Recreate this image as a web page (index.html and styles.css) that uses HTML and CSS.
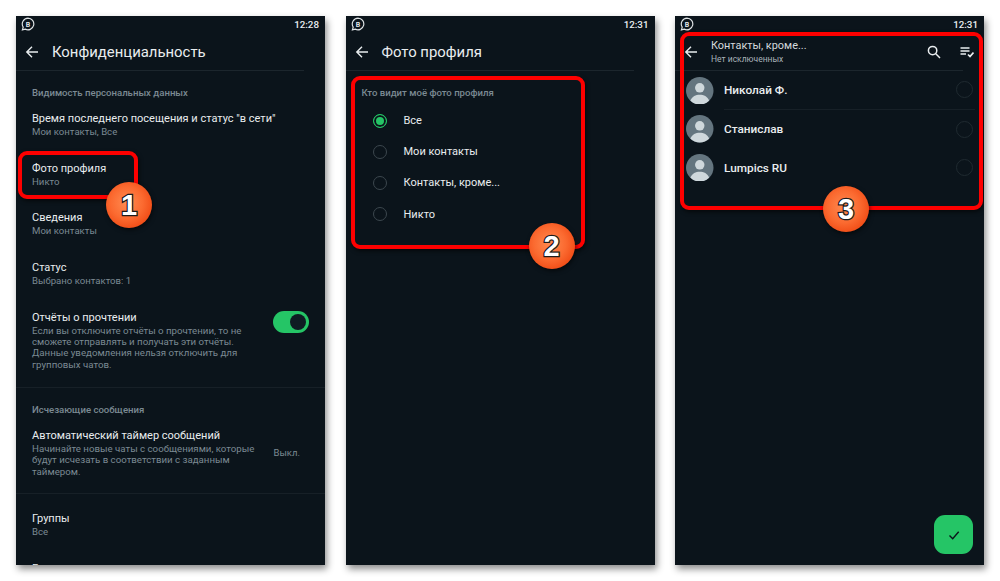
FILE: index.html
```html
<!DOCTYPE html>
<html lang="ru">
<head>
  <meta charset="UTF-8">
  <title>Конфиденциальность</title>
  <link rel="stylesheet" href="styles.css">
</head>
<body>

<div class="screens">

  <!-- экран 1 -->
  <section class="phone">
    <div class="status">
      <svg class="wa" viewBox="0 0 12 12"><path d="M6 1a5 5 0 1 1-2.4 9.4L1.2 11l.7-2.3A5 5 0 0 1 6 1z"/><text x="6" y="8.2" text-anchor="middle">B</text></svg>
      <span class="time">12:28</span>
    </div>
    <header class="appbar">
      <svg class="back" viewBox="0 0 14 14"><path d="M13 7H2M7 1.8 1.8 7 7 12.2"/></svg>
      <h1>Конфиденциальность</h1>
    </header>
    <h2 class="section-title">Видимость персональных данных</h2>
    <div class="row">
      <div class="row-title">Время последнего посещения и статус "в сети"</div>
      <div class="row-sub">Мои контакты, Все</div>
    </div>
    <div class="row">
      <div class="row-title">Фото профиля</div>
      <div class="row-sub">Никто</div>
    </div>
    <div class="row">
      <div class="row-title">Сведения</div>
      <div class="row-sub">Мои контакты</div>
    </div>
    <div class="row">
      <div class="row-title">Статус</div>
      <div class="row-sub">Выбрано контактов: 1</div>
    </div>
    <div class="row row-split row-last">
      <div>
        <div class="row-title">Отчёты о прочтении</div>
        <div class="row-desc">Если вы отключите отчёты о прочтении, то не<br>сможете отправлять и получать эти отчёты.<br>Данные уведомления нельзя отключить для<br>групповых чатов.</div>
      </div>
      <div class="toggle"><span class="knob"></span></div>
    </div>
    <h2 class="section-title">Исчезающие сообщения</h2>
    <div class="row row-split row-center row-last">
      <div>
        <div class="row-title">Автоматический таймер сообщений</div>
        <div class="row-desc">Начинайте новые чаты с сообщениями, которые<br>будут исчезать в соответствии с заданным<br>таймером.</div>
      </div>
      <div class="row-value">Выкл.</div>
    </div>
    <div class="row row-after">
      <div class="row-title">Группы</div>
      <div class="row-sub">Все</div>
    </div>
    <div class="row">
      <div class="row-title">Геоданные</div>
    </div>

    <div class="mark mark-1"></div>
    <div class="badge badge-1">1</div>
  </section>

  <!-- экран 2 -->
  <section class="phone">
    <div class="status">
      <svg class="wa" viewBox="0 0 12 12"><path d="M6 1a5 5 0 1 1-2.4 9.4L1.2 11l.7-2.3A5 5 0 0 1 6 1z"/><text x="6" y="8.2" text-anchor="middle">B</text></svg>
      <span class="time">12:31</span>
    </div>
    <header class="appbar">
      <svg class="back" viewBox="0 0 14 14"><path d="M13 7H2M7 1.8 1.8 7 7 12.2"/></svg>
      <h1>Фото профиля</h1>
    </header>
    <h2 class="section-title">Кто видит моё фото профиля</h2>
    <div class="options">
      <div class="option"><span class="radio radio-on"></span>Все</div>
      <div class="option"><span class="radio"></span>Мои контакты</div>
      <div class="option"><span class="radio"></span>Контакты, кроме...</div>
      <div class="option"><span class="radio"></span>Никто</div>
    </div>

    <div class="mark mark-2"></div>
    <div class="badge badge-2">2</div>
  </section>

  <!-- экран 3 -->
  <section class="phone">
    <div class="status">
      <svg class="wa" viewBox="0 0 12 12"><path d="M6 1a5 5 0 1 1-2.4 9.4L1.2 11l.7-2.3A5 5 0 0 1 6 1z"/><text x="6" y="8.2" text-anchor="middle">B</text></svg>
      <span class="time">12:31</span>
    </div>
    <header class="appbar">
      <svg class="back" viewBox="0 0 14 14"><path d="M13 7H2M7 1.8 1.8 7 7 12.2"/></svg>
      <div class="appbar-text">
        <div class="appbar-title">Контакты, кроме...</div>
        <div class="appbar-sub">Нет исключенных</div>
      </div>
      <svg class="tool tool-search" viewBox="0 0 14 14"><circle cx="5.6" cy="5.6" r="4.2"/><path d="M8.8 8.8 13 13"/></svg>
      <svg class="tool tool-list" viewBox="0 0 14 14"><path d="M.5 3h9M.5 6h9M.5 9h5.5M8 9.5l2 2 3.5-4"/></svg>
    </header>
    <div class="contacts">
      <div class="contact">
        <svg class="avatar" viewBox="0 0 28 28"><circle cx="14" cy="14" r="14" fill="#64757f"/><circle cx="14" cy="11" r="4.8" fill="#cfd8dc"/><path d="M4.5 24.3C6 19.5 10 18 14 18s8 1.5 9.5 6.3A14 14 0 0 1 4.5 24.3z" fill="#cfd8dc"/></svg>
        <div class="contact-main contact-line">
          <div class="contact-name">Николай Ф.</div>
          <span class="pick"></span>
        </div>
      </div>
      <div class="contact">
        <svg class="avatar" viewBox="0 0 28 28"><circle cx="14" cy="14" r="14" fill="#64757f"/><circle cx="14" cy="11" r="4.8" fill="#cfd8dc"/><path d="M4.5 24.3C6 19.5 10 18 14 18s8 1.5 9.5 6.3A14 14 0 0 1 4.5 24.3z" fill="#cfd8dc"/></svg>
        <div class="contact-main">
          <div class="contact-name">Станислав</div>
          <span class="pick"></span>
        </div>
      </div>
      <div class="contact">
        <svg class="avatar" viewBox="0 0 28 28"><circle cx="14" cy="14" r="14" fill="#64757f"/><circle cx="14" cy="11" r="4.8" fill="#cfd8dc"/><path d="M4.5 24.3C6 19.5 10 18 14 18s8 1.5 9.5 6.3A14 14 0 0 1 4.5 24.3z" fill="#cfd8dc"/></svg>
        <div class="contact-main">
          <div class="contact-name">Lumpics RU</div>
          <span class="pick"></span>
        </div>
      </div>
    </div>

    <button class="fab"><svg viewBox="0 0 14 14"><path d="M2.5 7.5 5.7 10.7 11.7 3.8"/></svg></button>

    <div class="mark mark-3"></div>
    <div class="badge badge-3">3</div>
  </section>

</div>

</body>
</html>
```

FILE: styles.css
```css
* {
  box-sizing: border-box;
}

body {
  margin: 0;
  background: #fff;
  font-family: Roboto, "Liberation Sans", sans-serif;
}

.screens {
  display: grid;
  grid-template-columns: repeat(3, 309px);
  gap: 20.5px;
  width: 1000px;
  height: 581px;
  padding: 16px;
}

.phone {
  position: relative;
  height: 549px;
  overflow: hidden;
  background: #0b141b;
  box-shadow: 2px 4px 7px rgba(0,0,0,0.45);
}

.status {
  display: flex;
  justify-content: space-between;
  align-items: center;
  height: 16px;
  padding: 0 6px 0 5px;
}

.wa {
  width: 14px;
  height: 14px;
}

.wa path {
  fill: none;
  stroke: #dfe3e5;
  stroke-width: 1;
}

.wa text {
  font-size: 6px;
  font-weight: 700;
  fill: #dfe3e5;
}

.time {
  font-size: 9.8px;
  font-weight: 500;
  color: #e9edef;
}

.appbar {
  display: flex;
  align-items: center;
  width: 288px;
  height: 39px;
  padding: 1px 0 0 9px;
  border-bottom: 1px solid #1c262d;
}

.back {
  flex: none;
  width: 14px;
  height: 14px;
  margin-right: 13px;
  fill: none;
  stroke: #e9edef;
  stroke-width: 1.4;
}

.appbar h1 {
  margin: 0;
  font-size: 14.9px;
  font-weight: 400;
  color: #e9edef;
}

.appbar-text {
  flex: 1;
}

.appbar-title {
  font-size: 10.9px;
  line-height: 14px;
  color: #d5dadd;
}

.appbar-sub {
  font-size: 8.5px;
  line-height: 12px;
  color: #a8b3b9;
}

.tool {
  flex: none;
  width: 14px;
  height: 14px;
  fill: none;
  stroke: #e9edef;
  stroke-width: 1.5;
}

.tool-search {
  margin-right: 19px;
}

.tool-list {
  margin-right: -11px;
  stroke-width: 1.7;
}

.section-title {
  margin: 16px 0 2px;
  padding-left: 16px;
  font-size: 9.6px;
  line-height: 12px;
  font-weight: 500;
  color: #7b8a93;
}

.row {
  padding: 11.3px 16px 11.9px;
}

.row-title {
  font-size: 11px;
  line-height: 14px;
  color: #e9edef;
}

.row-sub {
  font-size: 9.6px;
  line-height: 12.4px;
  color: #7b8a93;
}

.row-desc {
  font-size: 9.7px;
  line-height: 11.4px;
  color: #7b8a93;
}

.row-split {
  display: flex;
  justify-content: space-between;
}

.row-center {
  align-items: center;
}

.row-last {
  padding-bottom: 16.3px;
  border-bottom: 1px solid #172027;
}

.row-after {
  padding-top: 18px;
}

.row-value {
  margin: 0 9px 2px 0;
  font-size: 9.5px;
  color: #7b8a93;
}

.toggle {
  flex: none;
  display: flex;
  justify-content: flex-end;
  align-items: center;
  width: 36px;
  height: 22px;
  padding-right: 3px;
  border-radius: 11px;
  background: #25c566;
}

.knob {
  width: 16px;
  height: 16px;
  border-radius: 50%;
  background: #0f1c23;
}

.options {
  padding-top: 4px;
}

.option {
  display: flex;
  align-items: center;
  height: 31.2px;
  padding-left: 27px;
  font-size: 11px;
  color: #e9edef;
}

.radio {
  flex: none;
  width: 14px;
  height: 14px;
  margin-right: 17px;
  border: 1.5px solid #3c474e;
  border-radius: 50%;
}

.radio-on {
  border-color: #25c566;
  background: #25c566;
  box-shadow: inset 0 0 0 2px #0b141b;
}

.contact {
  display: flex;
  align-items: center;
  height: 38.7px;
  padding: 0 9px 0 11px;
}

.avatar {
  flex: none;
  width: 27.5px;
  height: 27.5px;
  margin-right: 10.5px;
}

.contact-main {
  flex: 1;
  align-self: stretch;
  display: flex;
  align-items: center;
}

.contact-line {
  border-bottom: 1px solid #172027;
}

.contact-name {
  flex: 1;
  font-size: 11.8px;
  font-weight: 500;
  color: #e9edef;
}

.pick {
  flex: none;
  width: 17px;
  height: 17px;
  margin-right: 2px;
  border: 1.5px solid #1f2a30;
  border-radius: 50%;
}

.fab {
  position: absolute;
  right: 11px;
  bottom: 11px;
  width: 39px;
  height: 39px;
  padding: 0;
  border: none;
  border-radius: 11px;
  background: #25c566;
  display: flex;
  align-items: center;
  justify-content: center;
}

.fab svg {
  width: 14px;
  height: 14px;
  fill: none;
  stroke: #0b141b;
  stroke-width: 1.4;
}

.mark {
  position: absolute;
  border: 4.5px solid #fe0000;
  border-radius: 9px;
  box-shadow: 1px 2px 4px rgba(0,0,0,0.6);
}

.mark-1 {
  left: 2px;
  top: 135px;
  width: 120px;
  height: 48px;
}

.mark-2 {
  left: 5px;
  top: 60px;
  width: 234px;
  height: 173px;
}

.mark-3 {
  left: 5px;
  top: 16px;
  width: 303px;
  height: 178px;
}

.badge {
  position: absolute;
  width: 46px;
  height: 46px;
  border-radius: 50%;
  background: radial-gradient(circle at 45% 45%, #ff8a50 0%, #fb6a30 45%, #e83300 100%);
  box-shadow: 1px 2px 4px rgba(0,0,0,0.55);
  text-align: center;
  font-family: "Liberation Sans", sans-serif;
  font-size: 29px;
  line-height: 46px;
  font-weight: 700;
  color: #fff;
  -webkit-text-stroke: 2.5px #1c1c1c;
  paint-order: stroke fill;
}

.badge-1 {
  left: 90px;
  top: 166px;
}

.badge-2 {
  left: 183px;
  top: 207px;
}

.badge-3 {
  left: 148px;
  top: 170px;
}
```
